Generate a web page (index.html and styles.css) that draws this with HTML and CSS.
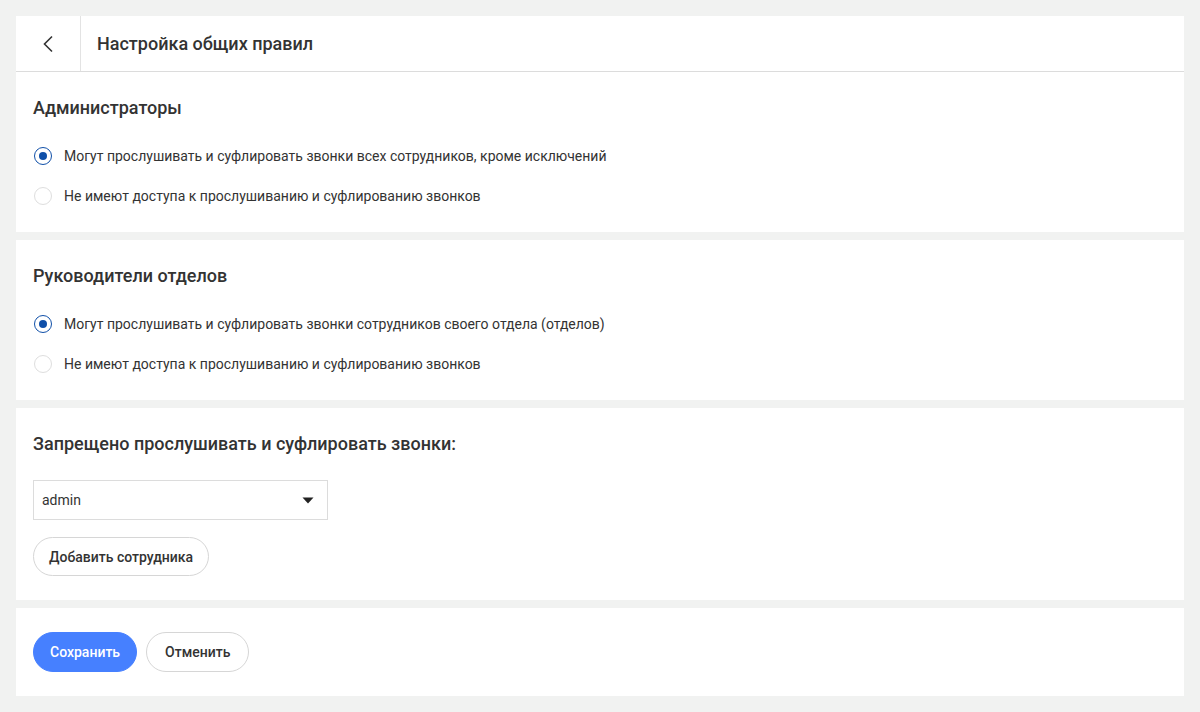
FILE: index.html
```html
<!DOCTYPE html>
<html lang="ru">
<head>
  <meta charset="UTF-8" />
  <title>Настройка общих правил</title>
  <link rel="stylesheet" href="styles.css">
</head>
<body>

  <div class="card">
    <div class="topbar">
      <button class="back-btn" aria-label="Назад">
        <svg width="12" height="18" viewBox="0 0 12 18"><path d="M10 1.5 2.5 9l7.5 7.5" fill="none" stroke="#333" stroke-width="1.6"/></svg>
      </button>
      <h1>Настройка общих правил</h1>
    </div>

    <div class="section">
      <h2>Администраторы</h2>
      <label class="radio"><input type="radio" name="admins" checked><span class="mark"></span>Могут прослушивать и суфлировать звонки всех сотрудников, кроме исключений</label>
      <label class="radio"><input type="radio" name="admins"><span class="mark"></span>Не имеют доступа к прослушиванию и суфлированию звонков</label>
    </div>
  </div>

  <div class="card">
    <div class="section">
      <h2>Руководители отделов</h2>
      <label class="radio"><input type="radio" name="heads" checked><span class="mark"></span>Могут прослушивать и суфлировать звонки сотрудников своего отдела (отделов)</label>
      <label class="radio"><input type="radio" name="heads"><span class="mark"></span>Не имеют доступа к прослушиванию и суфлированию звонков</label>
    </div>
  </div>

  <div class="card">
    <div class="section section-deny">
      <h2>Запрещено прослушивать и суфлировать звонки:</h2>
      <div class="select">
        <span>admin</span>
        <svg width="12" height="7" viewBox="0 0 12 7"><path d="M0.5 0.5h11L6 6.5z" fill="#222"/></svg>
      </div>
      <button class="btn">Добавить сотрудника</button>
    </div>
  </div>

  <div class="card">
    <div class="actions">
      <button class="btn btn-primary">Сохранить</button>
      <button class="btn btn-cancel">Отменить</button>
    </div>
  </div>

</body>
</html>
```

FILE: styles.css
```css
body {
  margin: 0;
  padding: 16px;
  background-color: #f1f2f1;
  font-family: Roboto, "Noto Sans", Arial, sans-serif;
  color: #333;
}
.card {
  background-color: #fff;
  margin-bottom: 8px;
}
.topbar {
  display: flex;
  align-items: center;
  height: 55px;
  border-bottom: 1px solid #dcdcdc;
}
.back-btn {
  width: 65px;
  height: 55px;
  border: none;
  border-right: 1px solid #e3e3e3;
  background: none;
  padding: 0;
  display: flex;
  align-items: center;
  justify-content: center;
  cursor: pointer;
}
.topbar h1 {
  margin: 0 0 0 16px;
  font-size: 18px;
  font-weight: 500;
  color: #333;
}
.section {
  padding: 26px 17px 21px;
  height: 113px;
}
.section h2 {
  margin: 0 0 18px;
  font-size: 18px;
  font-weight: 500;
  line-height: 20px;
  color: #333;
}
.radio {
  display: flex;
  align-items: center;
  height: 40px;
  font-size: 14px;
  color: #333;
  cursor: pointer;
}
.radio input {
  display: none;
}
.radio .mark {
  box-sizing: border-box;
  width: 18px;
  height: 18px;
  margin: 0 12px 0 1px;
  border: 1px solid #dedede;
  border-radius: 50%;
  display: flex;
  align-items: center;
  justify-content: center;
}
.radio input:checked + .mark {
  border: 1.5px solid #0f4fa8;
}
.radio input:checked + .mark::after {
  content: "";
  width: 8px;
  height: 8px;
  border-radius: 50%;
  background-color: #0f4fa8;
}
.section-deny {
  height: auto;
  padding: 26px 17px 24px;
}
.section-deny h2 {
  margin-bottom: 26px;
}
.select {
  box-sizing: border-box;
  width: 295px;
  height: 40px;
  border: 1px solid #dcdcdc;
  display: flex;
  align-items: center;
  justify-content: space-between;
  padding: 0 13px 0 8px;
  font-size: 14px;
  color: #333;
  margin-bottom: 17px;
}
.btn {
  height: 39px;
  padding: 0 15px;
  border: 1px solid #d6d6d6;
  border-radius: 20px;
  background-color: #fff;
  font-family: Roboto, "Noto Sans", Arial, sans-serif;
  font-size: 14px;
  font-weight: 500;
  color: #333;
  cursor: pointer;
}
.actions {
  display: flex;
  gap: 9px;
  padding: 24px 17px;
}
.actions .btn {
  height: 40px;
}
.btn-primary {
  background-color: #4680ff;
  border-color: #4680ff;
  color: #fff;
  padding: 0 16px;
}
.btn-cancel {
  padding: 0 18px;
}
```
